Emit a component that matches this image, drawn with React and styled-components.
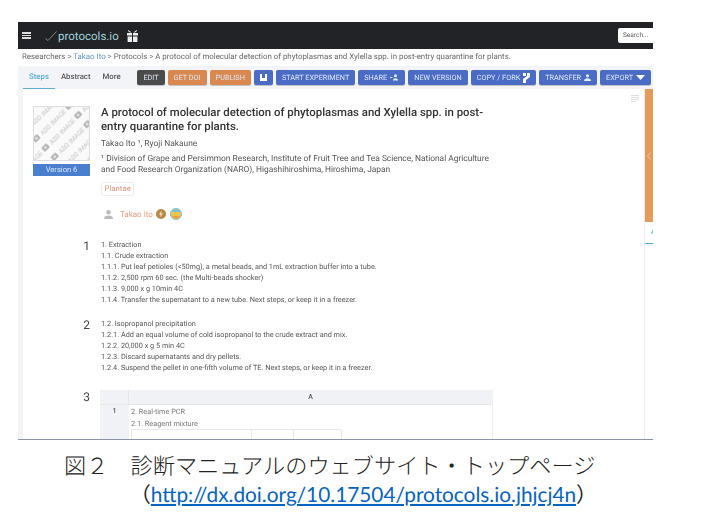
import React from 'react';
import styled, { createGlobalStyle } from 'styled-components';

const GlobalStyle = createGlobalStyle`
    html, body { margin:0; padding:0; background:#fff; }
    body { font-family:Roboto, "Liberation Sans", sans-serif; text-rendering:geometricPrecision; }
`;

const tools = [
    { label: 'EDIT', tone: 'dark' },
    { label: 'GET DOI', tone: 'orange' },
    { label: 'PUBLISH', tone: 'orange' },
    { icon: 'save', tone: 'blue', narrow: true },
    { label: 'START EXPERIMENT', tone: 'blue' },
    { label: 'SHARE', icon: 'people', tone: 'blue' },
    { label: 'NEW VERSION', tone: 'blue' },
    { label: 'COPY / FORK', icon: 'fork', tone: 'blue' },
    { label: 'TRANSFER', icon: 'person', tone: 'blue' },
    { label: 'EXPORT', icon: 'caret', tone: 'blue' },
];

const steps = [
    {
        num: 1,
        lines: [
            '1. Extraction',
            '1.1. Crude extraction',
            '1.1.1. Put leaf petioles (<50mg), a metal beads, and 1mL extraction buffer into a tube.',
            '1.1.2. 2,500 rpm 60 sec. (the Multi-beads shocker)',
            '1.1.3. 9,000 x g 10min 4C',
            '1.1.4. Transfer the supernatant to a new tube. Next steps, or keep it in a freezer.',
        ],
    },
    {
        num: 2,
        lines: [
            '1.2. Isopropanol precipitation',
            '1.2.1. Add an equal volume of cold isopropanol to the crude extract and mix.',
            '1.2.2. 20,000 x g 5 min 4C',
            '1.2.3. Discard supernatants and dry pellets.',
            '1.2.4. Suspend the pellet in one-fifth volume of TE. Next steps, or keep it in a freezer.',
        ],
    },
];

const ToolIcon = ({ name }) => {
    if (name === 'save') return (
        <svg width="9" height="9" viewBox="0 0 9 9">
            <path d="M1 1h7v7H1z" fill="#fff" />
            <path d="M3 1h3v4H3z" fill="#4a6cc4" />
        </svg>
    );
    if (name === 'people') return (
        <svg width="9" height="7" viewBox="0 0 9 7" fill="#e8edf8">
            <circle cx="5.5" cy="1.8" r="1.5" />
            <path d="M3 6.6c0-1.6 1.2-2.3 2.5-2.3S8 5 8 6.6zM0 3h2.4v.9H0z" />
        </svg>
    );
    if (name === 'fork') return (
        <svg width="7" height="10" viewBox="0 0 7 10" fill="#fff">
            <path d="M0 0h3v3H0zM4 0h3v4L3 7v3H0V6l4-3z" />
        </svg>
    );
    if (name === 'person') return (
        <svg width="7" height="7" viewBox="0 0 7 7" fill="#e8edf8">
            <circle cx="3.5" cy="1.8" r="1.6" />
            <path d="M0 7c0-2 1.6-2.8 3.5-2.8S7 5 7 7z" />
        </svg>
    );
    return (
        <svg width="9" height="5" viewBox="0 0 9 5"><path d="M0 0h9L4.5 5z" fill="#fff" /></svg>
    );
};

const CoverArt = () => (
    <svg width="57" height="55" viewBox="0 0 57 55">
        <defs>
            <pattern id="addImage" width="46" height="13" patternUnits="userSpaceOnUse" patternTransform="rotate(-45) translate(-14 6)">
                <text x="0" y="9" fontFamily="Roboto, sans-serif" fontSize="6.400" fill="#c2c2c2">ADD IMAGE</text>
                <rect x="36" y="3.500" width="7" height="5.500" rx="1" fill="#b4b4b4" />
                <circle cx="39.500" cy="6.200" r="1.300" fill="#ececec" />
            </pattern>
        </defs>
        <rect width="57" height="55" fill="#fafafa" />
        <rect width="57" height="55" fill="url(#addImage)" />
        <rect x=".5" y=".5" width="56" height="54" fill="none" stroke="#dedede" />
    </svg>
);

export default function App() {
    return (
        <>
            <GlobalStyle />
            <Page>
                <Frame>
                    <TopBar>
                        <Burger><i /><i /><i /></Burger>
                        <Logo>
                            <svg width="12" height="10" viewBox="0 0 12 10">
                                <path d="M.5 7.5 3 9.5 11.5.5" fill="none" stroke="#7d8a8c" strokeWidth="1" />
                            </svg>
                            protocols.io
                        </Logo>
                        <svg width="11" height="12" viewBox="0 0 11 12" fill="#eee">
                            <path d="M0 3h5v2.6H0zM6 3h5v2.6H6zM.6 6.4H5V12H.6zM6 6.4h4.4V12H6z" />
                            <path d="M1.5 0 4.5 2.6H3L1 1zM9.5 0 6.5 2.6H8L10 1z" />
                        </svg>
                        <Search>Search...</Search>
                    </TopBar>
                    <Crumbs>
                        Researchers &gt; <CrumbLink>Takao Ito</CrumbLink> &gt; Protocols &gt; A protocol of molecular detection of phytoplasmas and Xylella spp. in post-entry quarantine for plants.
                    </Crumbs>
                    <Toolbar>
                        <Tab $active>Steps</Tab>
                        <Tab>Abstract</Tab>
                        <Tab>More</Tab>
                        <Tools>
                            {tools.map((tool, index) => (
                                <ToolButton key={index} $tone={tool.tone} $narrow={tool.narrow}>
                                    {tool.label}
                                    {tool.icon && <ToolIcon name={tool.icon} />}
                                </ToolButton>
                            ))}
                        </Tools>
                    </Toolbar>
                    <Body>
                        <Main>
                            <Head>
                                <Cover>
                                    <CoverArt />
                                    <VersionTag>Version 6</VersionTag>
                                </Cover>
                                <HeadText>
                                    <Title>A protocol of molecular detection of phytoplasmas and Xylella spp. in post-entry quarantine for plants.</Title>
                                    <Authors>Takao Ito ¹, Ryoji Nakaune</Authors>
                                    <Affiliation>¹ Division of Grape and Persimmon Research, Institute of Fruit Tree and Tea Science, National Agriculture and Food Research Organization (NARO), Higashihiroshima, Hiroshima, Japan</Affiliation>
                                    <Tag>Plantae</Tag>
                                    <Owner>
                                        <svg width="9" height="9" viewBox="0 0 9 9" fill="#bbb">
                                            <circle cx="4.5" cy="2.3" r="2.2" />
                                            <path d="M0 9c0-2.5 2-3.4 4.5-3.4S9 6.500 9 9z" />
                                        </svg>
                                        <OwnerName>Takao Ito</OwnerName>
                                        <Badge>
                                            <svg width="10" height="10" viewBox="0 0 10 10">
                                                <circle cx="5" cy="5" r="5" fill="#b8894a" />
                                                <path d="M5.600 1.500 3 5.500h1.800L4.200 8.500 7 4.500H5.200z" fill="#f4e6c8" />
                                            </svg>
                                        </Badge>
                                        <Badge>
                                            <svg width="12" height="12" viewBox="0 0 12 12">
                                                <circle cx="6" cy="6" r="5.500" fill="#f6c445" stroke="#6cc0e6" />
                                                <path d="M1.500 4a5 5 0 0 1 9 0z" fill="#6cc0e6" />
                                                <path d="M2 8h8a4.500 4.500 0 0 1-8 0z" fill="#ef9a3c" />
                                            </svg>
                                        </Badge>
                                    </Owner>
                                </HeadText>
                            </Head>
                            <NoteIcon><i /><i /><i /><i /></NoteIcon>
                            {steps.map((step) => (
                                <Step key={step.num}>
                                    <StepNum>{step.num}</StepNum>
                                    <div>
                                        {step.lines.map((line) => <StepLine key={line}>{line}</StepLine>)}
                                    </div>
                                </Step>
                            ))}
                            <TableStep>
                                <StepNum $drop>3</StepNum>
                                <Sheet>
                                    <SheetCorner />
                                    <SheetHead>A</SheetHead>
                                    <SheetIndex>1</SheetIndex>
                                    <SheetCell>
                                        <CellLine>2. Real-time PCR</CellLine>
                                        <CellLine>2.1. Reagent mixture</CellLine>
                                        <InnerTable>
                                            <InnerCell /><InnerCell /><InnerCell />
                                        </InnerTable>
                                    </SheetCell>
                                </Sheet>
                            </TableStep>
                        </Main>
                        <Side>
                            <SideHandle>
                                <svg width="4" height="8" viewBox="0 0 4 8"><path d="M3.500.5.500 4l3 3.500" fill="none" stroke="#f2c49c" /></svg>
                            </SideHandle>
                            <SideTab>A</SideTab>
                        </Side>
                    </Body>
                </Frame>
                <Rule />
                <Caption>
                    <CaptionLine>図２　診断マニュアルのウェブサイト・トップページ</CaptionLine>
                    <LinkLine>（<DoiLink>http://dx.doi.org/10.17504/protocols.io.jhjcj4n</DoiLink>）</LinkLine>
                </Caption>
            </Page>
        </>
    );
}

const toneColors = {
    dark: '#4b4b4b',
    orange: '#d9894f',
    blue: '#4a6cc4',
};

const Page = styled.div`
    width:705px;
    height:527px;
    padding-top:22px;
    box-sizing:border-box;
    overflow:hidden;
`
const Frame = styled.div`
    width:635px;
    height:417px;
    margin-left:18px;
    display:flex;
    flex-direction:column;
    overflow:hidden;
    filter:blur(0.35px);
`
const TopBar = styled.div`
    height:27px;
    flex:none;
    background:#222326;
    display:flex;
    align-items:center;
    padding-left:4px;
`
const Burger = styled.div`
    width:9px;
    display:flex;
    flex-direction:column;
    gap:1px;
    margin-right:14px;
    i { display:block; height:1.500px; background:#ddd; }
`
const Logo = styled.div`
    display:flex;
    align-items:center;
    gap:1px;
    font-size:11.500px;
    color:#9fd3dc;
    margin-right:8px;
`
const Search = styled.div`
    margin-left:auto;
    width:35px;
    height:15px;
    box-sizing:border-box;
    background:#fff;
    border-radius:2px 0 0 2px;
    font-size:6.500px;
    line-height:15px;
    padding-left:5px;
    color:#555;
`
const Crumbs = styled.div`
    height:17px;
    flex:none;
    font-size:7.860px;
    line-height:15px;
    color:#666;
    padding-left:4px;
    white-space:nowrap;
`
const CrumbLink = styled.span`
    color:#5a93c4;
`
const Toolbar = styled.div`
    height:23px;
    flex:none;
    background:#f2f4f8;
    display:flex;
    align-items:stretch;
    padding-left:5px;
`
const Tab = styled.div`
    font-size:7.800px;
    font-weight:500;
    line-height:22px;
    padding:0 6px;
    color:${(p) => (p.$active ? '#5aaed0' : '#555')};
    border-bottom:${(p) => (p.$active ? '1px solid #5aaed0' : '1px solid transparent')};
    box-sizing:border-box;
`
const Tools = styled.div`
    display:flex;
    align-items:flex-start;
    gap:3px;
    margin-left:auto;
    margin-right:2px;
    padding-top:4px;
`
const ToolButton = styled.div`
    height:15px;
    display:flex;
    align-items:center;
    gap:3px;
    padding:0 ${(p) => (p.$narrow ? '5px' : '6px')};
    border-radius:2px;
    font-size:7.300px;
    color:#dfe6f6;
    white-space:nowrap;
    background:${(p) => toneColors[p.$tone]};
    box-shadow:0 1px 0 rgba(0,0,0,.2);
`
const Body = styled.div`
    flex:1;
    display:flex;
    min-height:0;
`
const Main = styled.div`
    flex:1;
    position:relative;
    border-left:5px solid #f2f4f8;
    padding:17px 0 0 10px;
    min-width:0;
`
const Head = styled.div`
    display:flex;
    gap:11px;
    height:134px;
`
const Cover = styled.div`
    width:57px;
    flex:none;
    display:flex;
    flex-direction:column;
    gap:3px;
    svg { display:block; }
`
const VersionTag = styled.div`
    height:12px;
    background:#4a7fd0;
    color:#d8e6fa;
    font-size:7.600px;
    line-height:12px;
    text-align:center;
`
const HeadText = styled.div`
    width:392px;
`
const Title = styled.div`
    font-size:11.400px;
    font-weight:500;
    line-height:14px;
    color:#333;
    margin:-1px 0 6px;
`
const Authors = styled.div`
    font-size:8.400px;
    line-height:11px;
    color:#555;
    margin-bottom:4px;
`
const Affiliation = styled.div`
    font-size:8.400px;
    line-height:11px;
    color:#555;
`
const Tag = styled.div`
    display:inline-block;
    margin-top:6px;
    font-size:7.800px;
    line-height:12px;
    padding:0 2.500px;
    color:#e0957a;
    border:1px solid #eee;
    border-radius:2px;
`
const Owner = styled.div`
    display:flex;
    align-items:center;
    margin-top:11px;
    padding-left:3px;
    height:14px;
`
const OwnerName = styled.span`
    font-size:8px;
    color:#e4a083;
    margin:0 3px 0 7px;
`
const Badge = styled.span`
    display:flex;
    margin-right:4px;
`
const NoteIcon = styled.div`
    position:absolute;
    top:6px;
    right:5px;
    width:8px;
    display:flex;
    flex-direction:column;
    gap:1px;
    i { display:block; height:1px; background:#ddd; }
    i:last-child { width:5px; }
`
const Step = styled.div`
    display:flex;
    margin-bottom:14px;
`
const StepNum = styled.div`
    width:57px;
    flex:none;
    text-align:right;
    padding:${(p) => (p.$drop ? '1px' : '0')} 11px 0 0;
    font-size:12px;
    line-height:13px;
    color:#444;
`
const StepLine = styled.div`
    font-size:7.300px;
    line-height:10.900px;
    color:#555;
    white-space:nowrap;
`
const TableStep = styled.div`
    display:flex;
    margin-top:16px;
`
const Sheet = styled.div`
    width:392px;
    margin-left:-1px;
    display:grid;
    grid-template-columns:29px 1fr;
    grid-template-rows:15px auto;
    border-right:1px solid #eee;
    height:100px;
`
const SheetCorner = styled.div`
    background:#f1f2f5;
    border-right:1px solid #e6e6e6;
    border-bottom:1px solid #e6e6e6;
`
const SheetHead = styled.div`
    background:#f1f2f5;
    border-bottom:1px solid #e6e6e6;
    font-size:7px;
    font-weight:500;
    color:#555;
    line-height:15px;
    text-align:center;
`
const SheetIndex = styled.div`
    background:#f1f2f5;
    font-size:7px;
    font-weight:500;
    color:#555;
    line-height:13px;
    text-align:center;
`
const SheetCell = styled.div`
    padding:1px 0 0 2px;
`
const CellLine = styled.div`
    font-size:7.300px;
    line-height:12px;
    color:#777;
`
const InnerTable = styled.div`
    display:grid;
    grid-template-columns:120px 42px 48px;
    width:210px;
    height:30px;
    margin-top:-1px;
    border-top:1px solid #e8e8e8;
    border-left:1px solid #e8e8e8;
    box-sizing:border-box;
`
const InnerCell = styled.div`
    border-right:1px solid #e8e8e8;
`
const Side = styled.div`
    width:9px;
    flex:none;
    border-left:1px solid #eee;
    display:flex;
    flex-direction:column;
    box-sizing:border-box;
`
const SideHandle = styled.div`
    height:133px;
    background:#e69a5a;
    display:flex;
    align-items:center;
    padding-left:2px;
`
const SideTab = styled.div`
    height:22px;
    box-sizing:border-box;
    font-size:6px;
    font-weight:700;
    line-height:22px;
    padding-left:6px;
    color:#5aaed0;
    border-bottom:1px solid #5aaed0;
`
const Rule = styled.div`
    width:635px;
    height:1px;
    margin-left:18px;
    background:#8d93a6;
`
const Caption = styled.div`
    padding-top:11px;
`
const CaptionLine = styled.div`
    margin-left:64px;
    font-family:"Noto Sans CJK JP", sans-serif;
    font-weight:300;
    font-size:22.200px;
    line-height:29px;
    color:#222;
    white-space:nowrap;
`
const LinkLine = styled.div`
    margin-left:130px;
    font-family:Lato, "Noto Sans CJK JP", sans-serif;
    font-size:20.800px;
    line-height:29px;
    color:#222;
    white-space:nowrap;
`
const DoiLink = styled.span`
    color:#0563c1;
    text-decoration:underline;
`
